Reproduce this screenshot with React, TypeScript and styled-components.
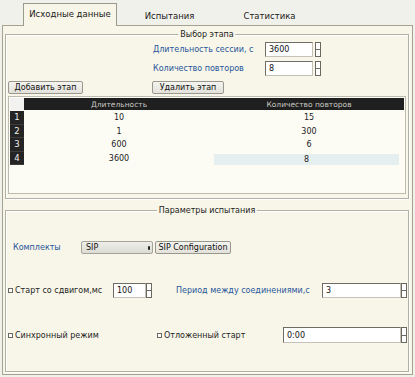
import React from "react";
import styled, { createGlobalStyle } from "styled-components";

const Global = createGlobalStyle`
  html, body { margin: 0; padding: 0; background: #f1f1ec; }
  body { font-family: "DejaVu Sans", "Liberation Sans", sans-serif; font-size: 8px; color: #1e1e1e; }
  * { box-sizing: border-box; }
`;

const Root = styled.div`
  width: 415px;
  height: 377px;
  overflow: hidden;
  display: flex;
  flex-direction: column;
  background: #f1f1ec;
`;

const TabBar = styled.div`
  height: 25px;
  display: flex;
  align-items: flex-end;
  gap: 5px;
  padding-left: 23px;
  position: relative;
  z-index: 1;
`;

const Tab = styled.div<{ $active?: boolean }>`
  width: ${(p) => (p.$active ? 94 : 95)}px;
  height: ${(p) => (p.$active ? 23 : 20)}px;
  display: flex;
  align-items: center;
  justify-content: center;
  font-size: 8.5px;
  color: #1a1a1a;
  margin-bottom: ${(p) => (p.$active ? -1 : 0)}px;
  border: ${(p) => (p.$active ? "1px solid #9c9a8c" : "1px solid transparent")};
  border-bottom: none;
  background: ${(p) => (p.$active ? "#f8f6e8" : "transparent")};
  padding-bottom: ${(p) => (p.$active ? 2 : 0)}px;
`;

const Panel = styled.div`
  flex: 1;
  margin: 0 2px 2px 2px;
  border: 1px solid #a4a293;
  background: #f8f6e8;
  display: flex;
  flex-direction: column;
  padding: 0 3px 0 2px;
`;

const Group = styled.div<{ $top: number; $grow?: boolean }>`
  position: relative;
  margin-top: ${(p) => p.$top}px;
  border: 1px solid #b2b0a2;
  box-shadow: inset 1px 1px 0 #ffffff, 1px 1px 0 #ffffff;
  display: flex;
  flex-direction: column;
  ${(p) => (p.$grow ? "flex: 1; margin-bottom: 2px;" : "")}
`;

const GroupTitle = styled.div`
  position: absolute;
  top: -6px;
  left: 50%;
  transform: translateX(-50%);
  background: #f8f6e8;
  padding: 0 2px;
  font-size: 8px;
  line-height: 11px;
  white-space: nowrap;
  color: #222;
`;

const FieldGrid = styled.div`
  display: grid;
  grid-template-columns: 112px 48px 2px 6px;
  grid-auto-rows: 15px;
  row-gap: 4px;
  margin: 7px 0 0 147px;
  align-items: center;
`;

const BlueLabel = styled.span<{ $w?: number; $ml?: number }>`
  color: #27559a;
  white-space: nowrap;
  ${(p) => (p.$w ? `width: ${p.$w}px; flex: none;` : "")}
  ${(p) => (p.$ml ? `margin-left: ${p.$ml}px;` : "")}
`;

const SpinWrap = styled.div<{ $w: number; $h: number; $detached?: boolean }>`
  width: ${(p) => p.$w}px;
  height: ${(p) => p.$h}px;
  flex: none;
  display: flex;
  gap: ${(p) => (p.$detached ? 2 : 0)}px;
`;

const SpinText = styled.div`
  flex: 1;
  height: 100%;
  background: #ffffff;
  border: 1px solid #6e6c64;
  border-right-color: #c4c2b8;
  border-bottom-color: #c4c2b8;
  display: flex;
  align-items: center;
  padding-left: 3px;
  font-size: 8px;
  color: #111;
`;

const SpinArrows = styled.div`
  width: 6px;
  height: 100%;
  display: flex;
  flex-direction: column;
  border: 1px solid #6a6860;
  background: #fff;
`;

const SpinCell = styled.div`
  flex: 1;
  & + & { border-top: 1px solid #6a6860; }
`;

const ButtonRow = styled.div`
  display: grid;
  grid-template-columns: 144px auto;
  justify-content: start;
  padding-left: 2px;
  margin-top: 5px;
  height: 13px;
`;

const Button = styled.div<{ $w: number }>`
  width: ${(p) => p.$w}px;
  height: 13px;
  display: flex;
  align-items: center;
  justify-content: center;
  background: linear-gradient(#f4f4f0, #e2e1da);
  border: 1px solid #9a988e;
  border-radius: 2px;
  font-size: 8px;
  color: #111;
  white-space: nowrap;
`;

const Table = styled.div`
  margin: 2px 2px 4px 2px;
  height: 98px;
  border: 1px solid #bdbbb0;
  background: #fcfbf4;
  padding: 1px 1px 0 1px;
`;

const TableGrid = styled.div`
  display: grid;
  grid-template-columns: 14px 1fr 1fr;
  grid-template-rows: 12px 1px repeat(4, 13.5px);
`;

const Corner = styled.div`
  background: #f2f2f0;
`;

const HeadCell = styled.div`
  background: #1f1f1f;
  color: #c9c9c4;
  font-size: 7.5px;
  display: flex;
  align-items: center;
  justify-content: center;
  white-space: nowrap;
`;

const Spacer = styled.div``;

const RowHead = styled.div`
  background: #242424;
  color: #f0f0f0;
  font-size: 8.5px;
  display: flex;
  align-items: center;
  justify-content: center;
  border-bottom: 1px solid #3c3c3c;
`;

const Cell = styled.div<{ $sel?: boolean }>`
  display: flex;
  align-items: center;
  justify-content: center;
  font-size: 8px;
  color: #222;
  background: ${(p) => (p.$sel ? "#e6eff0" : "transparent")};
  ${(p) => (p.$sel ? "margin-right: 5px; margin-top: 2px;" : "")}
`;

const Row = styled.div<{ $top: number; $h: number; $pl?: number }>`
  display: flex;
  align-items: center;
  margin-top: ${(p) => p.$top}px;
  height: ${(p) => p.$h}px;
  padding-left: ${(p) => p.$pl ?? 2}px;
`;

const Combo = styled.div`
  width: 72px;
  height: 13px;
  flex: none;
  display: flex;
  align-items: center;
  justify-content: space-between;
  padding: 0 2px 0 4px;
  background: linear-gradient(#eeeeea, #dcdcd4);
  border: 1px solid #a6a49a;
  border-radius: 2px;
  font-size: 8px;
  color: #111;
  margin-right: 2px;
`;

const ComboArrow = styled.span`
  width: 2px;
  height: 4px;
  background: #222;
  border-radius: 1px;
`;

const CheckLabel = styled.span<{ $w: number }>`
  width: ${(p) => p.$w}px;
  flex: none;
  display: flex;
  align-items: center;
  white-space: nowrap;
  color: #1e1e1e;
`;

const Box = styled.span`
  width: 5px;
  height: 5px;
  border: 1px solid #6a6860;
  background: #fff;
  margin-right: 2px;
  flex: none;
`;

function SpinBox({ value, w, h, detached }: { value: string; w: number; h: number; detached?: boolean }) {
  return (
    <SpinWrap $w={w} $h={h} $detached={detached}>
      <SpinText>{value}</SpinText>
      <SpinArrows>
        <SpinCell />
        <SpinCell />
      </SpinArrows>
    </SpinWrap>
  );
}

const rows = [
  ["10", "15"],
  ["1", "300"],
  ["600", "6"],
  ["3600", "8"],
];

export default function App() {
  return (
    <Root>
      <Global />
      <TabBar>
        <Tab $active>Исходные данные</Tab>
        <Tab>Испытания</Tab>
        <Tab>Статистика</Tab>
      </TabBar>
      <Panel>
        <Group $top={8}>
          <GroupTitle>Выбор этапа</GroupTitle>
          <FieldGrid>
            <BlueLabel>Длительность сессии, с</BlueLabel>
            <SpinText>3600</SpinText>
            <span />
            <SpinArrows>
              <SpinCell />
              <SpinCell />
            </SpinArrows>
            <BlueLabel>Количество повторов</BlueLabel>
            <SpinText>8</SpinText>
            <span />
            <SpinArrows>
              <SpinCell />
              <SpinCell />
            </SpinArrows>
          </FieldGrid>
          <ButtonRow>
            <Button $w={75}>Добавить этап</Button>
            <Button $w={72}>Удалить этап</Button>
          </ButtonRow>
          <Table>
            <TableGrid>
              <Corner />
              <HeadCell>Длительность</HeadCell>
              <HeadCell>Количество повторов</HeadCell>
              <Spacer />
              <Spacer />
              <Spacer />
              {rows.map((r, i) => (
                <React.Fragment key={i}>
                  <RowHead>{i + 1}</RowHead>
                  <Cell>{r[0]}</Cell>
                  <Cell $sel={i === 3}>{r[1]}</Cell>
                </React.Fragment>
              ))}
            </TableGrid>
          </Table>
        </Group>
        <Group $top={11} $grow>
          <GroupTitle>Параметры испытания</GroupTitle>
          <Row $top={30} $h={13} $pl={7}>
            <BlueLabel $w={68}>Комплекты</BlueLabel>
            <Combo>
              SIP
              <ComboArrow />
            </Combo>
            <Button $w={76}>SIP Configuration</Button>
          </Row>
          <Row $top={29} $h={15}>
            <CheckLabel $w={105}>
              <Box />
              Старт со сдвигом,мс
            </CheckLabel>
            <SpinBox value="100" w={39} h={15} />
            <BlueLabel $w={146} $ml={24}>
              Период между соединениями,с
            </BlueLabel>
            <SpinBox value="3" w={85} h={15} />
          </Row>
          <Row $top={29} $h={16}>
            <CheckLabel $w={149}>
              <Box />
              Синхронный режим
            </CheckLabel>
            <CheckLabel $w={126}>
              <Box />
              Отложенный старт
            </CheckLabel>
            <SpinBox value="0:00" w={124} h={16} />
          </Row>
        </Group>
      </Panel>
    </Root>
  );
}
